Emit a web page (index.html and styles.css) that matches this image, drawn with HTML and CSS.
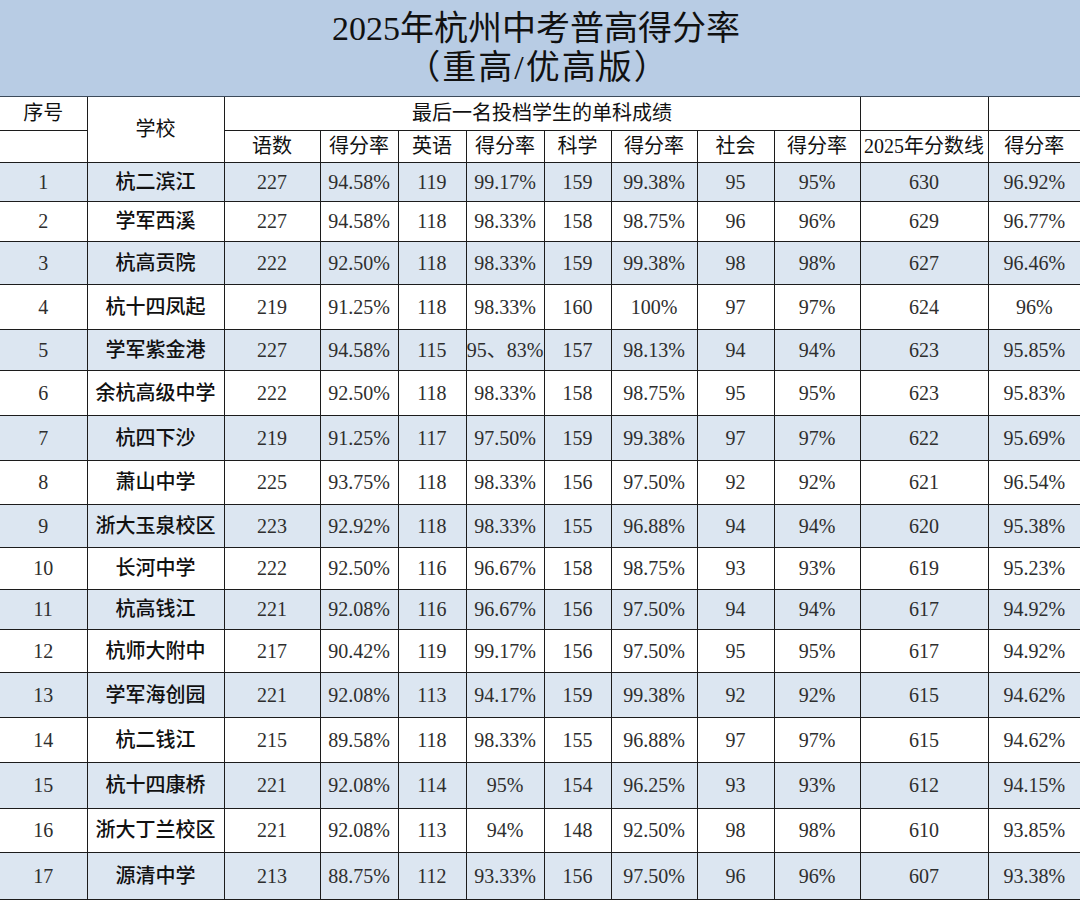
FILE: index.html
```html
<!DOCTYPE html>
<html lang="zh-CN">
<head>
<meta charset="utf-8">
<title>2025年杭州中考普高得分率</title>
<link rel="stylesheet" href="styles.css">
</head>
<body>
<table class="sheet">
  <colgroup>
    <col class="c-no"><col class="c-school"><col class="c-yw"><col class="c-r1"><col class="c-en"><col class="c-r2"><col class="c-sci"><col class="c-r3"><col class="c-soc"><col class="c-r4"><col class="c-line"><col class="c-r5">
  </colgroup>
  <thead>
    <tr class="title-row">
      <th colspan="12" class="title"><div class="t1">2025年杭州中考普高得分率</div><div class="t2">（重高/优高版）</div></th>
    </tr>
    <tr class="head1">
      <th class="hb">序号</th>
      <th rowspan="2" class="hb">学校</th>
      <th colspan="8" class="hm">最后一名投档学生的单科成绩</th>
      <th></th>
      <th></th>
    </tr>
    <tr class="head2">
      <th></th>
      <th class="hb">语数</th>
      <th class="hb">得分率</th>
      <th class="hb">英语</th>
      <th class="hb">得分率</th>
      <th class="hb">科学</th>
      <th class="hb">得分率</th>
      <th class="hb">社会</th>
      <th class="hb">得分率</th>
      <th class="hb">2025年分数线</th>
      <th class="hb">得分率</th>
    </tr>
  </thead>
  <tbody>
    <tr><td>1</td><td class="sc">杭二滨江</td><td>227</td><td>94.58%</td><td>119</td><td>99.17%</td><td>159</td><td>99.38%</td><td>95</td><td>95%</td><td>630</td><td>96.92%</td></tr>
    <tr><td>2</td><td class="sc">学军西溪</td><td>227</td><td>94.58%</td><td>118</td><td>98.33%</td><td>158</td><td>98.75%</td><td>96</td><td>96%</td><td>629</td><td>96.77%</td></tr>
    <tr><td>3</td><td class="sc">杭高贡院</td><td>222</td><td>92.50%</td><td>118</td><td>98.33%</td><td>159</td><td>99.38%</td><td>98</td><td>98%</td><td>627</td><td>96.46%</td></tr>
    <tr><td>4</td><td class="sc">杭十四凤起</td><td>219</td><td>91.25%</td><td>118</td><td>98.33%</td><td>160</td><td>100%</td><td>97</td><td>97%</td><td>624</td><td>96%</td></tr>
    <tr><td>5</td><td class="sc">学军紫金港</td><td>227</td><td>94.58%</td><td>115</td><td>95、83%</td><td>157</td><td>98.13%</td><td>94</td><td>94%</td><td>623</td><td>95.85%</td></tr>
    <tr><td>6</td><td class="sc">余杭高级中学</td><td>222</td><td>92.50%</td><td>118</td><td>98.33%</td><td>158</td><td>98.75%</td><td>95</td><td>95%</td><td>623</td><td>95.83%</td></tr>
    <tr><td>7</td><td class="sc">杭四下沙</td><td>219</td><td>91.25%</td><td>117</td><td>97.50%</td><td>159</td><td>99.38%</td><td>97</td><td>97%</td><td>622</td><td>95.69%</td></tr>
    <tr><td>8</td><td class="sc">萧山中学</td><td>225</td><td>93.75%</td><td>118</td><td>98.33%</td><td>156</td><td>97.50%</td><td>92</td><td>92%</td><td>621</td><td>96.54%</td></tr>
    <tr><td>9</td><td class="sc">浙大玉泉校区</td><td>223</td><td>92.92%</td><td>118</td><td>98.33%</td><td>155</td><td>96.88%</td><td>94</td><td>94%</td><td>620</td><td>95.38%</td></tr>
    <tr><td>10</td><td class="sc">长河中学</td><td>222</td><td>92.50%</td><td>116</td><td>96.67%</td><td>158</td><td>98.75%</td><td>93</td><td>93%</td><td>619</td><td>95.23%</td></tr>
    <tr><td>11</td><td class="sc">杭高钱江</td><td>221</td><td>92.08%</td><td>116</td><td>96.67%</td><td>156</td><td>97.50%</td><td>94</td><td>94%</td><td>617</td><td>94.92%</td></tr>
    <tr><td>12</td><td class="sc">杭师大附中</td><td>217</td><td>90.42%</td><td>119</td><td>99.17%</td><td>156</td><td>97.50%</td><td>95</td><td>95%</td><td>617</td><td>94.92%</td></tr>
    <tr><td>13</td><td class="sc">学军海创园</td><td>221</td><td>92.08%</td><td>113</td><td>94.17%</td><td>159</td><td>99.38%</td><td>92</td><td>92%</td><td>615</td><td>94.62%</td></tr>
    <tr><td>14</td><td class="sc">杭二钱江</td><td>215</td><td>89.58%</td><td>118</td><td>98.33%</td><td>155</td><td>96.88%</td><td>97</td><td>97%</td><td>615</td><td>94.62%</td></tr>
    <tr><td>15</td><td class="sc">杭十四康桥</td><td>221</td><td>92.08%</td><td>114</td><td>95%</td><td>154</td><td>96.25%</td><td>93</td><td>93%</td><td>612</td><td>94.15%</td></tr>
    <tr><td>16</td><td class="sc">浙大丁兰校区</td><td>221</td><td>92.08%</td><td>113</td><td>94%</td><td>148</td><td>92.50%</td><td>98</td><td>98%</td><td>610</td><td>93.85%</td></tr>
    <tr><td>17</td><td class="sc">源清中学</td><td>213</td><td>88.75%</td><td>112</td><td>93.33%</td><td>156</td><td>97.50%</td><td>96</td><td>96%</td><td>607</td><td>93.38%</td></tr>
  </tbody>
</table>
</body>
</html>
```

FILE: styles.css
```css
html, body {
  margin: 0;
  padding: 0;
  background: #ffffff;
}

.sheet {
  width: 1080px;
  table-layout: fixed;
  border-collapse: collapse;
  font-family: "Liberation Serif", "Noto Sans CJK SC", serif;
  font-size: 20px;
  color: #2e2e2e;
}

.c-no { width: 87px; }
.c-school { width: 137px; }
.c-yw { width: 96px; }
.c-r1 { width: 78px; }
.c-en { width: 68px; }
.c-r2 { width: 78px; }
.c-sci { width: 67px; }
.c-r3 { width: 86px; }
.c-soc { width: 77px; }
.c-r4 { width: 86px; }
.c-line { width: 128px; }
.c-r5 { width: 92px; }

.sheet th,
.sheet td {
  border: 1px solid #1c1c1c;
  padding: 0;
  text-align: center;
  vertical-align: middle;
  white-space: nowrap;
  overflow: hidden;
  line-height: 1;
}

.sheet tr > :first-child { border-left: none; }
.sheet tr > :last-child { border-right: none; }

.title-row { height: 96px; }
.sheet th.title {
  background: #b8cce4;
  border-top: none;
  border-bottom: 1px solid #3c4a5a;
  font-weight: 400;
  font-size: 34px;
  color: #111111;
  line-height: 39px;
}
.t1 { padding-right: 8px; }
.t2 { padding-right: 4px; letter-spacing: 2px; }

.head1 { height: 34px; }
.head2 { height: 32px; }

.sheet thead .head1 th,
.sheet thead .head2 th {
  background: #ffffff;
  color: #111111;
  font-weight: 400;
}
.sheet th.hb { font-weight: 500; }
.sheet th.hm { font-weight: 500; }

.sheet tbody td { background: #ffffff; }
.sheet tbody tr:nth-child(odd) td { background: #dce6f1; }
.sheet td.sc { font-weight: 500; color: #111111; }

.sheet tbody tr:nth-child(1) { height: 39px; }
.sheet tbody tr:nth-child(2) { height: 40px; }
.sheet tbody tr:nth-child(3) { height: 43px; }
.sheet tbody tr:nth-child(4) { height: 45px; }
.sheet tbody tr:nth-child(5) { height: 41px; }
.sheet tbody tr:nth-child(6) { height: 45px; }
.sheet tbody tr:nth-child(7) { height: 45px; }
.sheet tbody tr:nth-child(8) { height: 44px; }
.sheet tbody tr:nth-child(9) { height: 43px; }
.sheet tbody tr:nth-child(10) { height: 42px; }
.sheet tbody tr:nth-child(11) { height: 40px; }
.sheet tbody tr:nth-child(12) { height: 43px; }
.sheet tbody tr:nth-child(13) { height: 45px; }
.sheet tbody tr:nth-child(14) { height: 45px; }
.sheet tbody tr:nth-child(15) { height: 46px; }
.sheet tbody tr:nth-child(16) { height: 44px; }
.sheet tbody tr:nth-child(17) { height: 47px; }
```
